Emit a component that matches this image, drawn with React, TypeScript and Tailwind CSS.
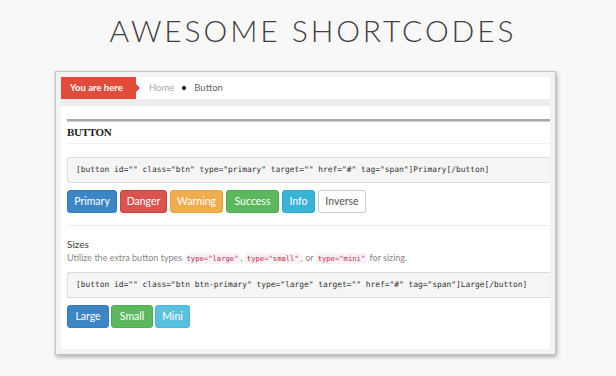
import React from 'react';

type Btn = { label: string; cls: string };

const mainButtons: Btn[] = [
  { label: 'Primary', cls: 'w-[50px] bg-[#3d86c6] border-[#357ebd] text-white' },
  { label: 'Danger', cls: 'w-[47px] bg-[#d9534f] border-[#d43f3a] text-white' },
  { label: 'Warning', cls: 'w-[53px] bg-[#f0ad4e] border-[#eea236] text-white' },
  { label: 'Success', cls: 'w-[53px] bg-[#5cb85c] border-[#4cae4c] text-white' },
  { label: 'Info', cls: 'w-[33px] bg-[#39b3d7] border-[#2aabd2] text-white' },
  { label: 'Inverse', cls: 'w-[48px] bg-white border-[#cccccc] text-[#555]' },
];

const sizeButtons: Btn[] = [
  { label: 'Large', cls: 'w-[42px] bg-[#3d86c6] border-[#357ebd] text-white' },
  { label: 'Small', cls: 'w-[42px] bg-[#5cb85c] border-[#4cae4c] text-white' },
  { label: 'Mini', cls: 'w-[35px] bg-[#5bc0de] border-[#46b8da] text-white' },
];

const CodeBox = ({ text }: { text: string }) => (
  <div className="h-[26px] flex items-center pl-2 bg-[#f5f5f5] border border-r-0 border-[#dddddd] rounded-l-[3px] text-[7.9px] text-[#333] whitespace-pre font-['DejaVu_Sans_Mono',monospace]">
    {text}
  </div>
);

const Inline = ({ children }: { children: React.ReactNode }) => (
  <span className="px-[2px] py-[1px] rounded-[2px] bg-[#f9f2f4] text-[#c7254e] text-[7.2px] font-['DejaVu_Sans_Mono',monospace]">
    {children}
  </span>
);

const ButtonRow = ({ items, gap }: { items: Btn[]; gap: string }) => (
  <div className={`flex ${gap}`}>
    {items.map((b) => (
      <div
        key={b.label}
        className={`h-[23px] flex items-center justify-center border rounded-[3px] text-[10.5px] ${b.cls}`}
      >
        {b.label}
      </div>
    ))}
  </div>
);

export default function App() {
  return (
    <div className="w-[616px] h-[376px] bg-[#f8f8f8] overflow-hidden font-['Lato',sans-serif]">
      <div className="pt-[13px] pl-[10px] h-[71px] text-center text-[30px] leading-[34px] tracking-[2.9px] font-light text-[#3f3f3f] font-['Lato',sans-serif]">
        AWESOME SHORTCODES
      </div>

      <div className="ml-[55px] w-[501px] h-[284px] border border-[#c4c4c4] bg-[#f3f3f3] p-[5px] shadow-[1px_2px_4px_rgba(0,0,0,0.3)]">
        <div className="h-full bg-white flex flex-col">
          {/* breadcrumb */}
          <div className="h-[22px] flex items-center text-[9.5px]">
            <div className="relative h-full w-[75px] bg-[#e04b3a] text-white font-bold flex items-center pl-[9px]">
              You are here
              <div className="absolute right-[-4px] top-[7px] w-0 h-0 border-y-[4px] border-y-transparent border-l-[4px] border-l-[#e04b3a]" />
            </div>
            <span className="ml-[13px] text-[#aaa]">Home</span>
            <span className="mx-[8px] w-[4px] h-[4px] rounded-full bg-black" />
            <span className="text-[#666]">Button</span>
          </div>
          <div className="h-[7px] bg-[#ececec]" />

          <div className="pl-[6px] flex flex-col">
            <div className="mt-[13px] h-[3px] bg-[#a8a8a8] border-b border-[#cfcfcf]" />
            <div className="h-[22px] flex items-center text-[11px] font-bold text-[#222] font-['Liberation_Serif',serif] tracking-[-0.3px] border-b border-[#f0f0f0]">
              BUTTON
            </div>

            <div className="mt-[13px]">
              <CodeBox text={'[button id="" class="btn" type="primary" target="" href="#" tag="span"]Primary[/button]'} />
            </div>
            <div className="mt-[7px]">
              <ButtonRow items={mainButtons} gap="gap-[3px]" />
            </div>
            <div className="mt-[12px] h-px bg-[#eeeeee]" />

            <div className="mt-[12px] text-[10px] leading-[13px] text-[#444]">Sizes</div>
            <div className="text-[9px] leading-[13px] text-[#888]">
              Utilize the extra button types <Inline>type="large"</Inline>, <Inline>type="small"</Inline>, or{' '}
              <Inline>type="mini"</Inline> for sizing.
            </div>

            <div className="mt-[7px]">
              <CodeBox text={'[button id="" class="btn btn-primary" type="large" target="" href="#" tag="span"]Large[/button]'} />
            </div>
            <div className="mt-[7px]">
              <ButtonRow items={sizeButtons} gap="gap-[2px]" />
            </div>
          </div>
        </div>
      </div>
    </div>
  );
}
